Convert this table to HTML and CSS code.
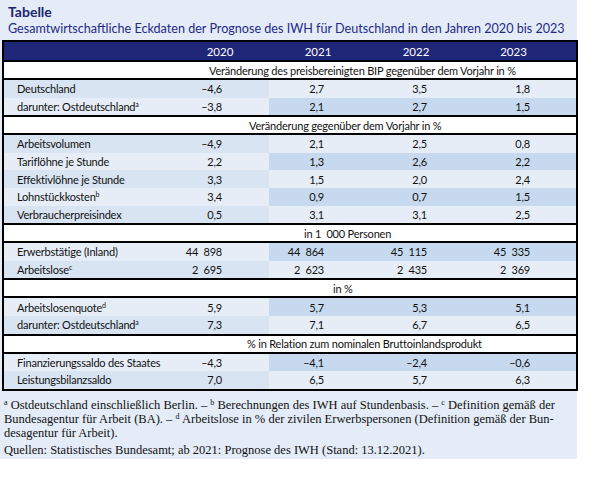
FILE: index.html
```html
<!DOCTYPE html>
<html lang="de">
<head>
<meta charset="utf-8">
<link rel="stylesheet" href="styles.css">
</head>
<body>
<div class="panel">
  <div class="title">Tabelle</div>
  <div class="subtitle">Gesamtwirtschaftliche Eckdaten der Prognose des IWH für Deutschland in den Jahren 2020 bis 2023</div>
  <table class="data">
    <colgroup><col class="c-label"><col class="c-y"><col class="c-y"><col class="c-y"><col class="c-last"></colgroup>
    <thead>
      <tr class="head"><th></th><th>2020</th><th>2021</th><th>2022</th><th>2023</th></tr>
    </thead>
    <tbody>
      <tr class="sec"><td></td><td colspan="4" class="s1">Veränderung des preisbereinigten BIP gegenüber dem Vorjahr in %</td></tr>
      <tr class="ra"><td>Deutschland</td><td>–4,6</td><td>2,7</td><td>3,5</td><td>1,8</td></tr>
      <tr class="rb"><td>darunter: Ostdeutschland<sup>a</sup></td><td>–3,8</td><td>2,1</td><td>2,7</td><td>1,5</td></tr>
      <tr class="sec"><td></td><td colspan="4" class="s2">Veränderung gegenüber dem Vorjahr in %</td></tr>
      <tr class="ra"><td>Arbeitsvolumen</td><td>–4,9</td><td>2,1</td><td>2,5</td><td>0,8</td></tr>
      <tr class="rb"><td>Tariflöhne je Stunde</td><td>2,2</td><td>1,3</td><td>2,6</td><td>2,2</td></tr>
      <tr class="ra"><td>Effektivlöhne je Stunde</td><td>3,3</td><td>1,5</td><td>2,0</td><td>2,4</td></tr>
      <tr class="rb"><td>Lohnstückkosten<sup>b</sup></td><td>3,4</td><td>0,9</td><td>0,7</td><td>1,5</td></tr>
      <tr class="ra"><td>Verbraucherpreisindex</td><td>0,5</td><td>3,1</td><td>3,1</td><td>2,5</td></tr>
      <tr class="sec"><td></td><td colspan="4" class="s3">in 1&nbsp; 000 Personen</td></tr>
      <tr class="rb"><td>Erwerbstätige (Inland)</td><td>44&nbsp; 898</td><td>44&nbsp; 864</td><td>45&nbsp; 115</td><td>45&nbsp; 335</td></tr>
      <tr class="ra"><td>Arbeitslose<sup>c</sup></td><td>2&nbsp; 695</td><td>2&nbsp; 623</td><td>2&nbsp; 435</td><td>2&nbsp; 369</td></tr>
      <tr class="sec"><td></td><td colspan="4" class="s4">in %</td></tr>
      <tr class="rb"><td>Arbeitslosenquote<sup>d</sup></td><td>5,9</td><td>5,7</td><td>5,3</td><td>5,1</td></tr>
      <tr class="ra"><td>darunter: Ostdeutschland<sup>a</sup></td><td>7,3</td><td>7,1</td><td>6,7</td><td>6,5</td></tr>
      <tr class="sec"><td></td><td colspan="4" class="s5">% in Relation zum nominalen Bruttoinlandsprodukt</td></tr>
      <tr class="rb"><td>Finanzierungssaldo des Staates</td><td>–4,3</td><td>–4,1</td><td>–2,4</td><td>–0,6</td></tr>
      <tr class="ra"><td>Leistungsbilanzsaldo</td><td>7,0</td><td>6,5</td><td>5,7</td><td>6,3</td></tr>
    </tbody>
  </table>
  <p class="notes"><sup>a</sup> Ostdeutschland einschließlich Berlin. – <sup>b</sup> Berechnungen des IWH auf Stundenbasis. – <sup>c</sup> Definition gemäß der Bundesagentur für Arbeit (BA). – <sup>d</sup> Arbeitslose in % der zivilen Erwerbspersonen (Definition gemäß der Bun­desagentur für Arbeit).</p>
  <p class="source">Quellen: Statistisches Bundesamt; ab 2021: Prognose des IWH (Stand: 13.12.2021).</p>
</div>
</body>
</html>
```
FILE: styles.css
```css
html, body {
  margin: 0;
  padding: 0;
  background: #ffffff;
}
.panel {
  width: 577px;
  box-sizing: border-box;
  background: #e4ecf7;
  padding: 4px 0 2px 0;
  font-family: "Lato", "Noto Sans", sans-serif;
}
.title {
  font-weight: bold;
  font-size: 14px;
  color: #1b2670;
  padding-left: 8px;
  line-height: 16px;
}
.subtitle {
  font-size: 12.6px;
  color: #1f2a86;
  padding-left: 8px;
  line-height: 17px;
  margin-bottom: 3px;
  white-space: nowrap;
}
.data {
  border-collapse: collapse;
  margin-left: 2px;
  width: 574px;
  border: 2px solid #000;
  font-size: 11px;
  letter-spacing: -0.2px;
  color: #111;
  table-layout: fixed;
}
.c-label { width: 168px; }
.c-y { width: 98px; }
.c-last { width: 112px; }
.head th {
  background: #202677;
  color: #fff;
  font-weight: normal;
  font-size: 11.5px;
  letter-spacing: 0;
  height: 18px;
  padding: 0;
  text-align: center;
}
.head th:last-child { padding-right: 14px; }
.sec td {
  background: #fff;
  border-top: 2px solid #000;
  border-bottom: 2px solid #000;
  height: 16px;
  padding: 0;
  white-space: nowrap;
}
.sec .s1 { padding-left: 38px; }
.sec .s2 { padding-left: 78px; }
.sec .s3 { padding-left: 133px; }
.sec .s4 { padding-left: 162px; }
.sec .s5 { padding-left: 76px; }
.ra td, .rb td {
  height: 17.6px;
  padding: 0;
  text-align: right;
  white-space: nowrap;
}
.ra td:first-child, .rb td:first-child {
  text-align: left;
  padding-left: 13px;
}
.ra td:nth-child(2), .rb td:nth-child(2) { padding-right: 47px; }
.ra td:nth-child(3), .rb td:nth-child(3) { padding-right: 43px; }
.ra td:nth-child(4), .rb td:nth-child(4) { padding-right: 38px; }
.ra td:nth-child(5), .rb td:nth-child(5) { padding-right: 46px; }
.ra td { background: #d8e4f2; }
.ra td:nth-child(n+3) { background: #e6edf7; }
.rb td { background: #e6edf7; }
.rb td:nth-child(n+3) { background: #c6d9ee; }
sup {
  font-size: 7px;
  vertical-align: 4px;
  line-height: 0;
}
.notes {
  font-family: "Liberation Serif", serif;
  font-size: 12.5px;
  line-height: 14px;
  color: #111;
  margin: 7px 0 0 4px;
  width: 560px;
}
.notes sup { font-size: 8px; }
.source {
  font-family: "Liberation Serif", serif;
  font-size: 12.5px;
  line-height: 14px;
  color: #111;
  margin: 3px 0 0 4px;
}
```
